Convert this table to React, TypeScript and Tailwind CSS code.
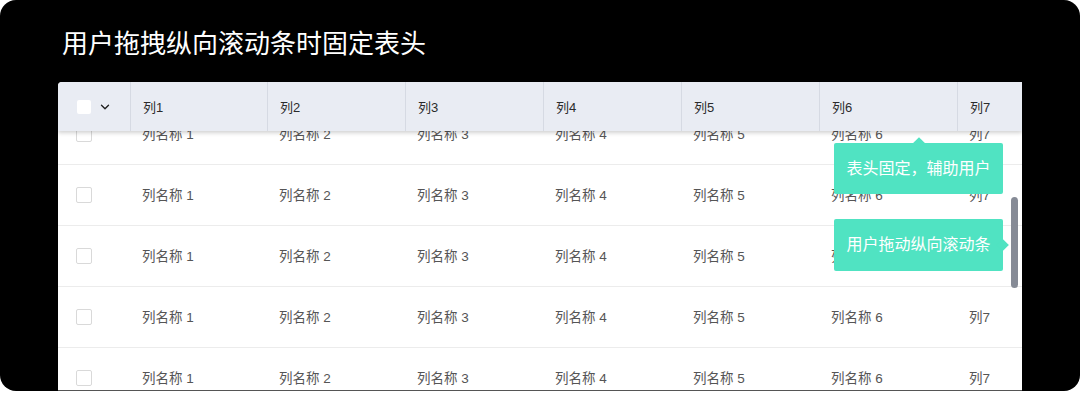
import { ChevronDown } from 'lucide-react';

const font = "font-['Liberation_Sans','Noto_Sans_CJK_SC',sans-serif]";
const grid = 'grid grid-cols-[72px_137px_138px_138px_138px_138px_138px_1fr]';
const headers = ['列1', '列2', '列3', '列4', '列5', '列6', '列7'];
const cells = ['列名称 1', '列名称 2', '列名称 3', '列名称 4', '列名称 5', '列名称 6', '列7'];

function Tip({ text, arrow, className }: { text: string; arrow: 'up' | 'right'; className: string }) {
  return (
    <div
      className={`absolute z-20 flex h-[51px] w-[169px] items-center justify-center rounded-[2px] bg-[#50e3c2] text-[16px] text-white ${className}`}
    >
      {arrow === 'up' ? (
        <span className="absolute -top-[4px] left-1/2 h-[9px] w-[9px] -translate-x-1/2 rotate-45 bg-[#50e3c2]" />
      ) : (
        <span className="absolute -right-[4px] top-1/2 h-[9px] w-[9px] -translate-y-1/2 rotate-45 bg-[#50e3c2]" />
      )}
      <span className="relative">{text}</span>
    </div>
  );
}

export default function App() {
  return (
    <div className={`h-[409px] w-[1080px] bg-white ${font}`}>
      <div className="flex h-[391px] flex-col overflow-hidden rounded-[16px] bg-black px-[58px] pt-[31px]">
        <h1 className="ml-[4px] text-[26px] leading-[26px] text-white">用户拖拽纵向滚动条时固定表头</h1>

        <div className="relative mt-[25px] h-[309px] w-[964px] overflow-hidden rounded-tl-[4px] border-b border-[#555] bg-white">
          {/* 固定表头 */}
          <div
            className={`${grid} absolute left-0 right-0 top-0 z-10 h-[49px] bg-[#e9ecf3] text-[13px] text-[#2b2b2b] shadow-[0_2px_4px_rgba(0,0,0,0.18)]`}
          >
            <div className="flex items-center pl-[19px]">
              <span className="h-[14px] w-[14px] rounded-[2px] bg-white" />
              <ChevronDown size={14} strokeWidth={2.4} className="ml-[7px] text-[#222]" />
            </div>
            {headers.map((h) => (
              <div key={h} className="flex items-center border-l border-[#d6dae3] pl-[12px] pt-[2px]">
                {h}
              </div>
            ))}
          </div>

          {/* 表体 */}
          <div className="pt-[22px]">
            {[0, 1, 2, 3, 4].map((r) => (
              <div key={r} className={`${grid} h-[61px] border-b border-[#ececec] text-[13.5px] text-[#555]`}>
                <div className="flex items-center pl-[18px]">
                  <span className="h-[16px] w-[16px] rounded-[2px] border border-[#d9d9d9] bg-white" />
                </div>
                {cells.map((c, i) => (
                  <div key={i} className="flex items-center pl-[12px] pt-[3px]">
                    {c}
                  </div>
                ))}
              </div>
            ))}
          </div>

          <div className="absolute right-[4px] top-[115px] h-[91px] w-[7px] rounded-full bg-[#868b96]" />

          <Tip text="表头固定，辅助用户" arrow="up" className="left-[776px] top-[61px]" />
          <Tip text="用户拖动纵向滚动条" arrow="right" className="left-[776px] top-[137px] h-[52px]" />
        </div>
      </div>
    </div>
  );
}
